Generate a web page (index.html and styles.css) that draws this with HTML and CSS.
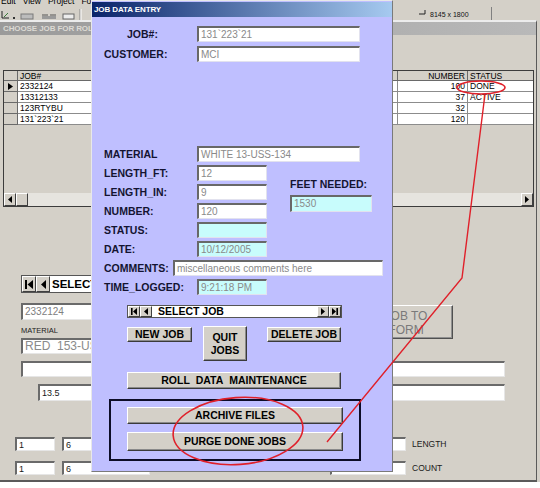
FILE: index.html
```html
<!DOCTYPE html>
<html>
<head>
<meta charset="utf-8">
<link rel="stylesheet" href="styles.css">
</head>
<body>
<div class="screen">
  <div class="menubar">
    <span>Edit</span><span>View</span><span>Project</span><span>Format</span><span>Debug</span><span>Run</span><span>Query</span><span>Diagram</span><span>Tools</span><span>Add-Ins</span><span>Window</span><span>Help</span>
  </div>
  <div class="toolbar">
    <svg class="tb-icons" width="90" height="13" viewBox="0 0 90 13">
      <path d="M2 4v7h7" stroke="#222" fill="none"/>
      <path d="M4 10l4-4" stroke="#3a7a3a"/>
      <rect x="13" y="10" width="2" height="2" fill="#333"/>
      <rect x="21" y="7" width="12" height="5" fill="#bcbcbc" stroke="#7a7a7a"/>
      <path d="M42 8h6M50 8h6" stroke="#555"/>
      <rect x="42" y="9" width="14" height="3" fill="#9a9a9a"/>
      <rect x="63" y="7" width="11" height="5" fill="#ececec" stroke="#666"/>
      <path d="M80 2v11" stroke="#888"/>
      <path d="M81 2v11" stroke="#fff"/>
    </svg>
    <div class="sizebox">
      <svg width="9" height="8" viewBox="0 0 9 8"><path d="M1 5h6V1" stroke="#222" fill="none"/></svg>
      <span>8145 x 1800</span>
    </div>
  </div>

  <div class="mdi">
    <div class="caption">CHOOSE JOB FOR ROLL SELECTION</div>
    <div class="form">
      <div class="grid">
        <div class="g-row g-head">
          <div class="c sel"></div><div class="c job">JOB#</div><div class="c mid"></div><div class="c num">NUMBER</div><div class="c st">STATUS</div>
        </div>
        <div class="g-row">
          <div class="c sel"><svg width="5" height="7" viewBox="0 0 5 7"><path d="M0 0l5 3.5L0 7z" fill="#000"/></svg></div><div class="c job">2332124</div><div class="c mid"></div><div class="c num">100</div><div class="c st">DONE</div>
        </div>
        <div class="g-row">
          <div class="c sel"></div><div class="c job">13312133</div><div class="c mid"></div><div class="c num">37</div><div class="c st">ACTIVE</div>
        </div>
        <div class="g-row">
          <div class="c sel"></div><div class="c job">123RTYBU</div><div class="c mid"></div><div class="c num">32</div><div class="c st"></div>
        </div>
        <div class="g-row">
          <div class="c sel"></div><div class="c job">131`223`21</div><div class="c mid"></div><div class="c num">120</div><div class="c st"></div>
        </div>
        <div class="hscroll">
          <div class="sbtn"><svg width="4" height="7" viewBox="0 0 4 7"><path d="M4 0L0 3.5L4 7z" fill="#000"/></svg></div>
          <div class="sthumb"></div>
          <div class="strack"></div>
          <div class="sbtn"><svg width="4" height="7" viewBox="0 0 4 7"><path d="M0 0l4 3.5L0 7z" fill="#000"/></svg></div>
        </div>
      </div>

      <div class="nav-big">
        <div class="nbtn"><svg width="8" height="9" viewBox="0 0 8 9"><path d="M0 0h2v9H0z M8 0L2.5 4.5L8 9z" fill="#000"/></svg></div>
        <div class="nbtn"><svg width="5" height="9" viewBox="0 0 5 9"><path d="M5 0L0 4.5L5 9z" fill="#000"/></svg></div>
        <div class="nbig-text">SELECT JOB</div>
      </div>

      <div class="row-a">
        <div class="col-a">
          <div class="bfield f-job">2332124</div>
          <div class="blabel">MATERIAL</div>
          <div class="bfield f-mat">RED&nbsp; 153-USS-120</div>
        </div>
        <div class="jobform">JOB TO<br>FORM</div>
      </div>
      <div class="bfield f-wide"></div>
      <div class="bfield f-135">13.5</div>

      <div class="row-n first">
        <div class="bfield f-1">1</div>
        <div class="bfield f-6">6</div>
        <div class="bfield f-r"></div>
        <div class="nlabel">LENGTH</div>
      </div>
      <div class="row-n">
        <div class="bfield f-1">1</div>
        <div class="bfield f-6">6</div>
        <div class="bfield f-r"></div>
        <div class="nlabel">COUNT</div>
      </div>
    </div>
  </div>

  <div class="dialog">
    <div class="dtitle">JOB DATA ENTRY</div>
    <div class="dbody">
      <div class="frow r-first">
        <div class="lbl lbl-job">JOB#:</div>
        <div class="fld w163">131`223`21</div>
      </div>
      <div class="frow r-cust">
        <div class="lbl">CUSTOMER:</div>
        <div class="fld w163">MCI</div>
      </div>
      <div class="frow r-mat">
        <div class="lbl">MATERIAL</div>
        <div class="fld w163">WHITE 13-USS-134</div>
      </div>
      <div class="split">
        <div class="leftcol">
          <div class="frow"><div class="lbl">LENGTH_FT:</div><div class="fld w70">12</div></div>
          <div class="frow"><div class="lbl">LENGTH_IN:</div><div class="fld w70">9</div></div>
          <div class="frow"><div class="lbl">NUMBER:</div><div class="fld w70">120</div></div>
          <div class="frow"><div class="lbl">STATUS:</div><div class="fld w70 cyan"></div></div>
          <div class="frow"><div class="lbl">DATE:</div><div class="fld w70 cyan">10/12/2005</div></div>
        </div>
        <div class="rightcol">
          <div class="lbl feet">FEET NEEDED:</div>
          <div class="fld cyan feetfld">1530</div>
        </div>
      </div>
      <div class="frow">
        <div class="lbl lbl-com">COMMENTS:</div>
        <div class="fld w210">miscellaneous comments here</div>
      </div>
      <div class="frow">
        <div class="lbl">TIME_LOGGED:</div>
        <div class="fld w70 cyan">9:21:18 PM</div>
      </div>

      <div class="dnav">
        <div class="dnbtn"><svg width="6" height="7" viewBox="0 0 6 7"><path d="M0 0h1.6v7H0z M6 0L2 3.5L6 7z" fill="#000"/></svg></div>
        <div class="dnbtn"><svg width="4" height="7" viewBox="0 0 4 7"><path d="M4 0L0 3.5L4 7z" fill="#000"/></svg></div>
        <div class="dntext">SELECT JOB</div>
        <div class="dnbtn"><svg width="4" height="7" viewBox="0 0 4 7"><path d="M0 0l4 3.5L0 7z" fill="#000"/></svg></div>
        <div class="dnbtn"><svg width="6" height="7" viewBox="0 0 6 7"><path d="M4.4 0H6v7H4.4z M0 0l4 3.5L0 7z" fill="#000"/></svg></div>
      </div>

      <div class="brow">
        <div class="btn b-new">NEW JOB</div>
        <div class="btn b-quit">QUIT<br>JOBS</div>
        <div class="btn b-del">DELETE JOB</div>
      </div>
      <div class="btn b-roll">ROLL&nbsp; DATA&nbsp; MAINTENANCE</div>

      <div class="frame">
        <div class="btn b-arch">ARCHIVE FILES</div>
        <div class="btn b-purge">PURGE DONE JOBS</div>
      </div>
    </div>
  </div>

  <svg class="marks" width="540" height="488" viewBox="0 0 540 488">
    <ellipse cx="481" cy="87.5" rx="24" ry="6.5" fill="none" stroke="#e0202a" stroke-width="1.6"/>
    <polyline points="485,94 462,278 327,442" fill="none" stroke="#e0202a" stroke-width="1.4"/>
    <ellipse cx="238" cy="431" rx="65" ry="33.5" transform="rotate(-4 238 431)" fill="none" stroke="#e0202a" stroke-width="1.6"/>
  </svg>
</div>
</body>
</html>
```

FILE: styles.css
```css
* { box-sizing: border-box; }
html, body { margin: 0; padding: 0; }
body {
  width: 540px;
  height: 488px;
  overflow: hidden;
  background: #ffffff;
  font-family: "Liberation Sans", Arial, sans-serif;
  color: #000;
}
.screen {
  position: relative;
  width: 540px;
  height: 482px;
  background: #d4d0c8;
}

/* menu + toolbar */
.menubar {
  height: 7px;
  overflow: hidden;
  display: flex;
  gap: 7px;
  padding-left: 1px;
  font-size: 8.5px;
}
.menubar span {
  display: block;
  line-height: 9px;
  margin-top: -3px;
  white-space: nowrap;
}
.toolbar {
  height: 13px;
  display: flex;
  align-items: flex-start;
  overflow: hidden;
}
.tb-icons { display: block; }
.sizebox {
  margin-left: auto;
  margin-right: 48px;
  width: 96px;
  height: 13px;
  border-right: 1px solid #808080;
  display: flex;
  align-items: flex-end;
  gap: 3px;
  padding-left: 22px;
  padding-bottom: 1px;
  font-size: 7px;
  color: #111;
  line-height: 8px;
}
.sizebox svg { display: block; margin-bottom: 2px; }

/* MDI child window */
.mdi {
  width: 537px;
  height: 462px;
  border-top: 2px solid #ececec;
  border-right: 1px solid #5a5a5a;
  border-bottom: 2px solid #5a5a5a;
  display: flex;
  flex-direction: column;
}
.caption {
  height: 13px;
  line-height: 13px;
  background: linear-gradient(to right, #9a9a9a, #b9b9b9);
  color: #dcdad4;
  font-size: 8px;
  font-weight: bold;
  padding-left: 3px;
  letter-spacing: -0.1px;
  white-space: nowrap;
  overflow: hidden;
}
.form {
  display: flex;
  flex-direction: column;
  align-items: flex-start;
}

/* data grid */
.grid {
  margin: 35px 0 0 3px;
  width: 531px;
  height: 137px;
  border: 1px solid #3c3c3c;
  display: flex;
  flex-direction: column;
  background: #d4d0c8;
}
.g-row {
  display: grid;
  grid-template-columns: 14px 110px 1fr 70px 65px;
  height: 11px;
  font-size: 8.5px;
  line-height: 10px;
}
.g-head { height: 10px; }
.c {
  background: #fff;
  border-right: 1px solid #8c8c8c;
  border-bottom: 1px solid #8c8c8c;
  padding: 0 2px;
  white-space: nowrap;
  overflow: hidden;
}
.g-head .c { background: #d4d0c8; border-color: #6a6a6a; }
.c.sel {
  background: #d4d0c8;
  border-color: #6a6a6a;
  display: flex;
  align-items: center;
  justify-content: center;
  padding: 0;
}
.c.num { text-align: right; }
.c.st { border-right: none; }
.hscroll {
  margin-top: auto;
  height: 13px;
  display: flex;
  background: #e6e4df;
}
.sbtn, .sthumb {
  width: 12px;
  height: 13px;
  background: #d4d0c8;
  border: 1px solid;
  border-color: #fff #404040 #404040 #fff;
  display: flex;
  align-items: center;
  justify-content: center;
}
.strack { flex: 1; }

/* background form controls */
.bfield {
  background: #fff;
  border-top: 2px solid #6a6a6a;
  border-left: 2px solid #6a6a6a;
  border-bottom: 1px solid #e6e6e6;
  border-right: 1px solid #e6e6e6;
  font-size: 9px;
  color: #1a1a1a;
  padding-left: 2px;
  white-space: nowrap;
  overflow: hidden;
}
.nav-big {
  margin: 68px 0 0 21px;
  width: 300px;
  height: 18px;
  display: flex;
  border: 1px solid #555;
  background: #fff;
}
.nbtn {
  width: 14px;
  height: 16px;
  background: #d4d0c8;
  border: 1px solid;
  border-color: #fff #404040 #404040 #fff;
  display: flex;
  align-items: center;
  justify-content: center;
}
.nbig-text {
  font-size: 11.5px;
  font-weight: bold;
  line-height: 16px;
  padding-left: 2px;
}
.row-a {
  margin: 10px 0 0 21px;
  display: flex;
  align-items: flex-start;
}
.col-a { width: 200px; display: flex; flex-direction: column; align-items: flex-start; }
.f-job { width: 200px; height: 17px; line-height: 14px; font-size: 10px; color: #808080; }
.blabel { margin-top: 6px; height: 9px; font-size: 7.5px; line-height: 9px; color: #222; }
.f-mat { margin-top: 3px; width: 200px; height: 16px; font-size: 12px; line-height: 13px; color: #8a8a8a; }
.jobform {
  margin: 2px 0 0 138px;
  width: 94px;
  height: 34px;
  background: #d4d0c8;
  border: 1px solid;
  border-color: #fff #505050 #505050 #fff;
  box-shadow: inset -1px -1px #909090;
  color: #7a7a7a;
  font-size: 12px;
  line-height: 14px;
  text-align: center;
  padding-top: 3px;
}
.f-wide { margin: 7px 0 0 21px; width: 484px; height: 16px; }
.f-135 { margin: 7px 0 0 38px; width: 467px; height: 17px; line-height: 14px; }
.row-n {
  margin: 10px 0 0 15px;
  display: flex;
  align-items: center;
}
.row-n.first { margin-top: 36px; }
.f-1 { width: 40px; height: 14px; line-height: 12px; }
.f-6 { margin-left: 7px; width: 88px; height: 14px; line-height: 12px; }
.f-r { margin-left: 180px; width: 76px; height: 14px; }
.nlabel { margin-left: 6px; font-size: 8.5px; color: #1a1a1a; }

/* dialog window */
.dialog {
  position: absolute;
  left: 91px;
  top: 0;
  width: 302px;
  height: 472px;
  background: #bfbfff;
  border: 1px solid;
  border-color: #e8e8e8 #7a7a7a #7a7a7a #e8e8e8;
  padding-top: 1px;
}
.dtitle {
  height: 15px;
  line-height: 15px;
  background: linear-gradient(to right, #0a246a, #a6caf0);
  color: #fff;
  font-size: 8px;
  font-weight: bold;
  padding-left: 2px;
  letter-spacing: -0.1px;
}
.dbody {
  padding: 0 0 0 12px;
  display: flex;
  flex-direction: column;
  align-items: flex-start;
}
.frow {
  display: flex;
  align-items: center;
  height: 16px;
  margin-top: 3px;
}
.r-first { margin-top: 9px; }
.r-cust { margin-top: 4px; }
.r-mat { margin-top: 84px; }
.lbl {
  width: 93px;
  font-size: 10.5px;
  font-weight: bold;
  color: #141432;
  white-space: nowrap;
}
.lbl-job { padding-left: 23px; }
.lbl-com { width: 69px; }
.fld {
  height: 16px;
  background: #fff;
  border-top: 2px solid #686868;
  border-left: 2px solid #686868;
  border-bottom: 1px solid #e2e2ee;
  border-right: 1px solid #e2e2ee;
  font-size: 10px;
  line-height: 13px;
  color: #8a8a8a;
  padding-left: 2px;
  white-space: nowrap;
  overflow: hidden;
}
.fld.cyan { background: #c8fcfc; }
.w163 { width: 163px; }
.w70 { width: 70px; }
.w210 { width: 210px; }
.split { display: flex; align-items: flex-start; }
.leftcol { display: flex; flex-direction: column; }
.rightcol {
  margin: 16px 0 0 23px;
  display: flex;
  flex-direction: column;
}
.feet { width: auto; height: 12px; line-height: 12px; }
.feetfld { margin-top: 5px; width: 82px; height: 17px; }

.dnav {
  margin: 10px 0 0 23px;
  width: 215px;
  height: 13px;
  display: flex;
  background: #fff;
  border: 1px solid #555;
}
.dnbtn {
  width: 12px;
  height: 11px;
  background: #d4d0c8;
  border: 1px solid;
  border-color: #fff #404040 #404040 #fff;
  display: flex;
  align-items: center;
  justify-content: center;
}
.dntext {
  flex: 1;
  font-size: 10.5px;
  font-weight: bold;
  line-height: 11px;
  padding-left: 6px;
}

.btn {
  background: #d4d0c8;
  border: 1px solid;
  border-color: #fff #3a3a3a #3a3a3a #fff;
  box-shadow: inset -1px -1px #8a8a8a;
  font-size: 10.5px;
  font-weight: bold;
  text-align: center;
  color: #000;
  white-space: nowrap;
}
.brow {
  margin: 8px 0 0 23px;
  display: flex;
  align-items: flex-start;
}
.b-new { margin-top: 1px; width: 65px; height: 15px; line-height: 13px; }
.b-quit { margin-left: 11px; width: 44px; height: 35px; line-height: 13px; padding-top: 4px; }
.b-del { margin: 1px 0 0 20px; width: 74px; height: 15px; line-height: 13px; }
.b-roll { margin: 11px 0 0 23px; width: 214px; height: 17px; line-height: 15px; }
.frame {
  margin: 10px 0 0 5px;
  width: 252px;
  height: 62px;
  border: 2px solid #0c0c28;
  padding: 6px 0 0 16px;
  display: flex;
  flex-direction: column;
  align-items: flex-start;
}
.b-arch { width: 216px; height: 17px; line-height: 15px; }
.b-purge { margin-top: 8px; width: 216px; height: 19px; line-height: 17px; }

/* red annotation overlay */
.marks {
  position: absolute;
  left: 0;
  top: 0;
  pointer-events: none;
}
```
